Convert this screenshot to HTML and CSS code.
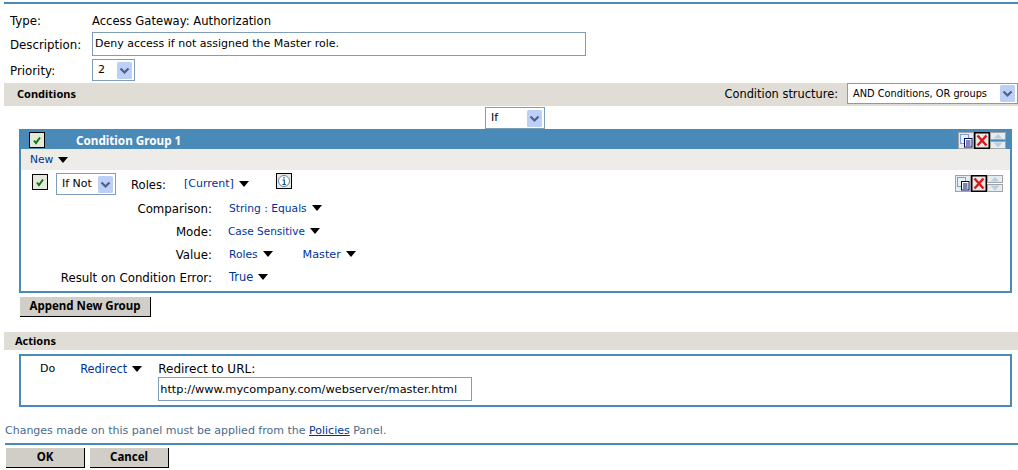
FILE: index.html
```html
<!DOCTYPE html>
<html lang="en">
<head>
<meta charset="utf-8">
<title>Access Gateway: Authorization</title>
<link rel="stylesheet" href="styles.css">
</head>
<body>
<svg class="defs" width="0" height="0" aria-hidden="true">
  <symbol id="check" viewBox="0 0 16 16"><rect x=".5" y=".5" width="15" height="15" fill="#e6e8dc" stroke="#000"/><path d="M5 8.5 L7 11 L11 5.5" fill="none" stroke="#0a7a12" stroke-width="2"/></symbol>
  <symbol id="chev" viewBox="0 0 15 17"><rect width="15" height="17" rx="1.5" fill="#bcd0f7"/><path d="M3.5 6.5 L7.5 10.5 L11.5 6.5" fill="none" stroke="#4d6185" stroke-width="2.2"/></symbol>
  <symbol id="copy" viewBox="0 0 16 17"><rect x=".5" y=".5" width="15" height="16" fill="#e4ecef" stroke="#a3a3a3"/><rect x="2.5" y="2.5" width="8" height="9" fill="#e8f0fb" stroke="#7f9fd0"/><rect x="6.5" y="6.5" width="7.5" height="8.5" fill="#fff" stroke="#000a66"/><path d="M8 9h4.5M8 11h4.5M8 13h4.5" stroke="#000a66"/></symbol>
  <symbol id="del" viewBox="0 0 16 17"><rect x=".75" y=".75" width="14.5" height="15.5" fill="#e9e9e4" stroke="#000" stroke-width="1.5"/><path d="M3.5 3.5 L12.5 13.5 M12.5 3.5 L3.5 13.5" stroke="#e3131c" stroke-width="2.4"/></symbol>
  <symbol id="move" viewBox="0 0 16 17"><rect x=".5" y=".5" width="15" height="7" fill="#e9ecee" stroke="#a3a3a3"/><rect x=".5" y="9.5" width="15" height="7" fill="#e9ecee" stroke="#a3a3a3"/><path d="M8 2 L12.5 6.5 H3.5 Z" fill="#b7cfe6"/><path d="M8 15.5 L12.5 10.5 H3.5 Z" fill="#b7cfe6"/></symbol>
  <symbol id="info" viewBox="0 0 16 16"><rect x=".5" y=".5" width="15" height="15" fill="#e8e8e0" stroke="#000"/><circle cx="8" cy="8" r="5.5" fill="#fff" stroke="#5b86ad"/><path d="M8 4v1.6M6.5 7h1.8v4M6.5 11.5h3.4" stroke="#0d4f86" stroke-width="1.2" fill="none"/></symbol>
</svg>

<div class="page">
  <div class="rule rule-top"></div>

  <div class="form">
    <div class="label row-type">Type:</div>
    <div class="row-type type-value">Access Gateway: Authorization</div>
    <div class="label row-desc">Description:</div>
    <div class="field field-desc">Deny access if not assigned the Master role.</div>
    <div class="label row-pri">Priority:</div>
    <div class="select select-pri"><span>2</span><svg class="chev"><use href="#chev"/></svg></div>
  </div>

  <div class="bar bar-conditions">
    <span class="bar-title">Conditions</span>
    <div class="structure">
      <span class="structure-label">Condition structure:</span>
      <div class="select select-structure"><span>AND Conditions, OR groups</span><svg class="chev"><use href="#chev"/></svg></div>
    </div>
  </div>

  <div class="if-line">
    <div class="select select-if"><span>If</span><svg class="chev"><use href="#chev"/></svg></div>
  </div>

  <section class="box group">
    <header class="group-head">
      <svg class="ico check-head"><use href="#check"/></svg>
      <span class="group-title">Condition Group 1</span>
      <div class="tools">
        <svg class="ico"><use href="#copy"/></svg><svg class="ico"><use href="#del"/></svg><svg class="ico"><use href="#move"/></svg>
      </div>
    </header>
    <div class="new-bar"><a class="link">New</a><i class="caret"></i></div>
    <div class="cond">
      <svg class="ico check-row"><use href="#check"/></svg>
      <div class="select select-ifnot"><span>If Not</span><svg class="chev"><use href="#chev"/></svg></div>
      <span class="roles-label">Roles:</span>
      <a class="link roles-value">[Current]</a><i class="caret"></i>
      <svg class="ico info"><use href="#info"/></svg>
      <div class="tools tools-row">
        <svg class="ico"><use href="#copy"/></svg><svg class="ico"><use href="#del"/></svg><svg class="ico"><use href="#move"/></svg>
      </div>
    </div>
    <div class="details">
      <div class="d-label">Comparison:</div><div class="d-value"><a class="link">String : Equals</a><i class="caret"></i></div>
      <div class="d-label">Mode:</div><div class="d-value"><a class="link link-case">Case Sensitive</a><i class="caret"></i></div>
      <div class="d-label">Value:</div><div class="d-value"><a class="link">Roles</a><i class="caret"></i><a class="link master">Master</a><i class="caret"></i></div>
      <div class="d-label">Result on Condition Error:</div><div class="d-value"><a class="link link-true">True</a><i class="caret"></i></div>
    </div>
  </section>

  <button class="btn btn-append">Append New Group</button>

  <div class="bar bar-actions"><span class="bar-title">Actions</span></div>

  <section class="box actions">
    <span class="do">Do</span>
    <div class="do-type"><a class="link link-redirect">Redirect</a><i class="caret"></i></div>
    <div class="redirect">
      <div class="redirect-label">Redirect to URL:</div>
      <div class="field field-url">http://www.mycompany.com/webserver/master.html</div>
    </div>
  </section>

  <p class="note">Changes made on this panel must be applied from the <a class="policies">Policies</a> Panel.</p>

  <div class="rule rule-bottom"></div>
  <div class="footer">
    <button class="btn btn-foot">OK</button>
    <button class="btn btn-foot">Cancel</button>
  </div>
</div>
</body>
</html>
```
FILE: styles.css
```css
* { box-sizing: border-box; }
html, body { margin: 0; padding: 0; }
body {
  width: 1018px;
  height: 470px;
  overflow: hidden;
  background: #fff;
  color: #000;
  font-family: "DejaVu Sans", Verdana, sans-serif;
  font-size: 11px;
  line-height: 14px;
}
.defs { position: absolute; }
.page { padding: 2px 0 0 4px; }
.rule { height: 2px; background: #4a8ab8; }

.form {
  display: grid;
  grid-template-columns: 88px 494px;
  grid-template-rows: 28px 27px 22px;
  align-items: center;
}
.form .label { padding-left: 6px; font-size: 11.8px; }
.row-type { padding-top: 5px; }
.type-value { font-size: 11.6px; }
.field {
  border: 1px solid #7f9db9;
  background: #fff;
  padding-left: 2px;
  display: flex;
  align-items: center;
}
.field-desc { height: 24px; align-self: start; }
.row-desc { padding-bottom: 1px; }
.row-pri { padding-top: 2px; }
.select-pri { width: 43px; }

.select {
  border: 1px solid #7f9db9;
  background: #fff;
  height: 22px;
  display: flex;
  align-items: center;
  justify-content: space-between;
  padding: 0 2px 0 5px;
  white-space: nowrap;
}
.chev { width: 15px; height: 17px; flex: none; }
.select-if { width: 60px; }
.select-ifnot { width: 60px; }
.select-structure { width: 171px; height: 21px; font-size: 9.8px; }

.bar {
  display: flex;
  align-items: center;
  justify-content: space-between;
  background: #e0ddd6;
  margin-top: 2px;
}
.bar-title { font-family: "Noto Sans", sans-serif; font-weight: bold; font-size: 11px; }
.bar-conditions { height: 23px; padding-left: 13px; align-items: flex-start; }
.bar-conditions .bar-title { padding-top: 4px; }
.structure { display: flex; align-items: center; gap: 9px; }
.structure-label { font-size: 11.4px; }
.if-line { padding-left: 481px; height: 23px; padding-top: 1px; }

.box { border: 2px solid #4a8ab8; margin-left: 15px; width: 993px; }
.group { height: 164px; }
.group-head {
  height: 18px;
  background: #4a8ab8;
  display: flex;
  align-items: center;
  color: #fff;
}
.ico { width: 16px; height: 17px; flex: none; display: block; }
.check-head { margin-left: 8px; height: 16px; }
.group-title { margin-left: 31px; font-family: "Noto Sans", sans-serif; font-weight: bold; font-size: 11.7px; }
.tools { margin-left: auto; margin-right: 4px; display: flex; }
.new-bar {
  height: 21px;
  background: #eeece9;
  padding: 0 0 0 9px;
  display: flex;
  align-items: center;
}
.link { color: #003399; text-decoration: none; font-size: 10.7px; }
.caret {
  display: inline-block;
  width: 0;
  height: 0;
  margin-left: 5px;
  border-left: 5px solid transparent;
  border-right: 5px solid transparent;
  border-top: 6px solid #000;
  vertical-align: 1px;
  flex: none;
}
.cond { display: flex; align-items: flex-start; padding-top: 3px; height: 27px; }
.check-row { margin: 1px 0 0 11px; height: 16px; }
.select-ifnot { margin-left: 8px; }
.roles-label { margin: 5px 0 0 15px; font-size: 11.6px; }
.roles-value { margin: 4px 0 0 18px; font-size: 11px; }
.cond .caret { margin-top: 8px; }
.cond .info { margin: 0 0 0 27px; height: 16px; }
.tools-row { margin-right: 7px; margin-top: 2px; }

.details {
  display: grid;
  grid-template-columns: 191px 1fr;
  grid-auto-rows: 23px;
  column-gap: 17px;
  align-items: center;
}
.d-label { text-align: right; font-size: 11.8px; }
.link-case { font-size: 10.5px; margin-left: -1px; }
.link-true { font-size: 11.4px; }
.master { margin-left: 30px; font-size: 11.2px; }

.btn {
  display: block;
  padding: 0 0 2px;
  font: bold 11.5px/14px "Noto Sans", sans-serif;
  color: #000;
  background: #d1cec7;
  border: 0;
  border-right: 1px solid #000;
  border-bottom: 1px solid #000;
  height: 20px;
}
.btn-append { width: 131px; margin: 4px 0 0 16px; }

.bar-actions { height: 18px; margin-top: 15px; padding-left: 11px; }
.actions {
  height: 53px;
  margin-top: 4px;
  display: flex;
  align-items: flex-start;
}
.do { margin: 6px 0 0 19px; }
.do-type { margin: 6px 0 0 25px; width: 78px; }
.link-redirect { font-size: 11.4px; }
.redirect { margin-top: 6px; }
.redirect-label { font-size: 12px; }
.field-url { width: 314px; height: 24px; margin-top: 1px; font-size: 11.35px; padding-left: 1px; }

.note { margin: 17px 0 0 1px; color: #4a6a8c; height: 14px; }
.policies { color: #003399; text-decoration: underline; }
.rule-bottom { margin: 5px 0 0 1px; }
.footer { display: flex; gap: 5px; margin: 3px 0 0 2px; }
.btn-foot { width: 79px; }
```
